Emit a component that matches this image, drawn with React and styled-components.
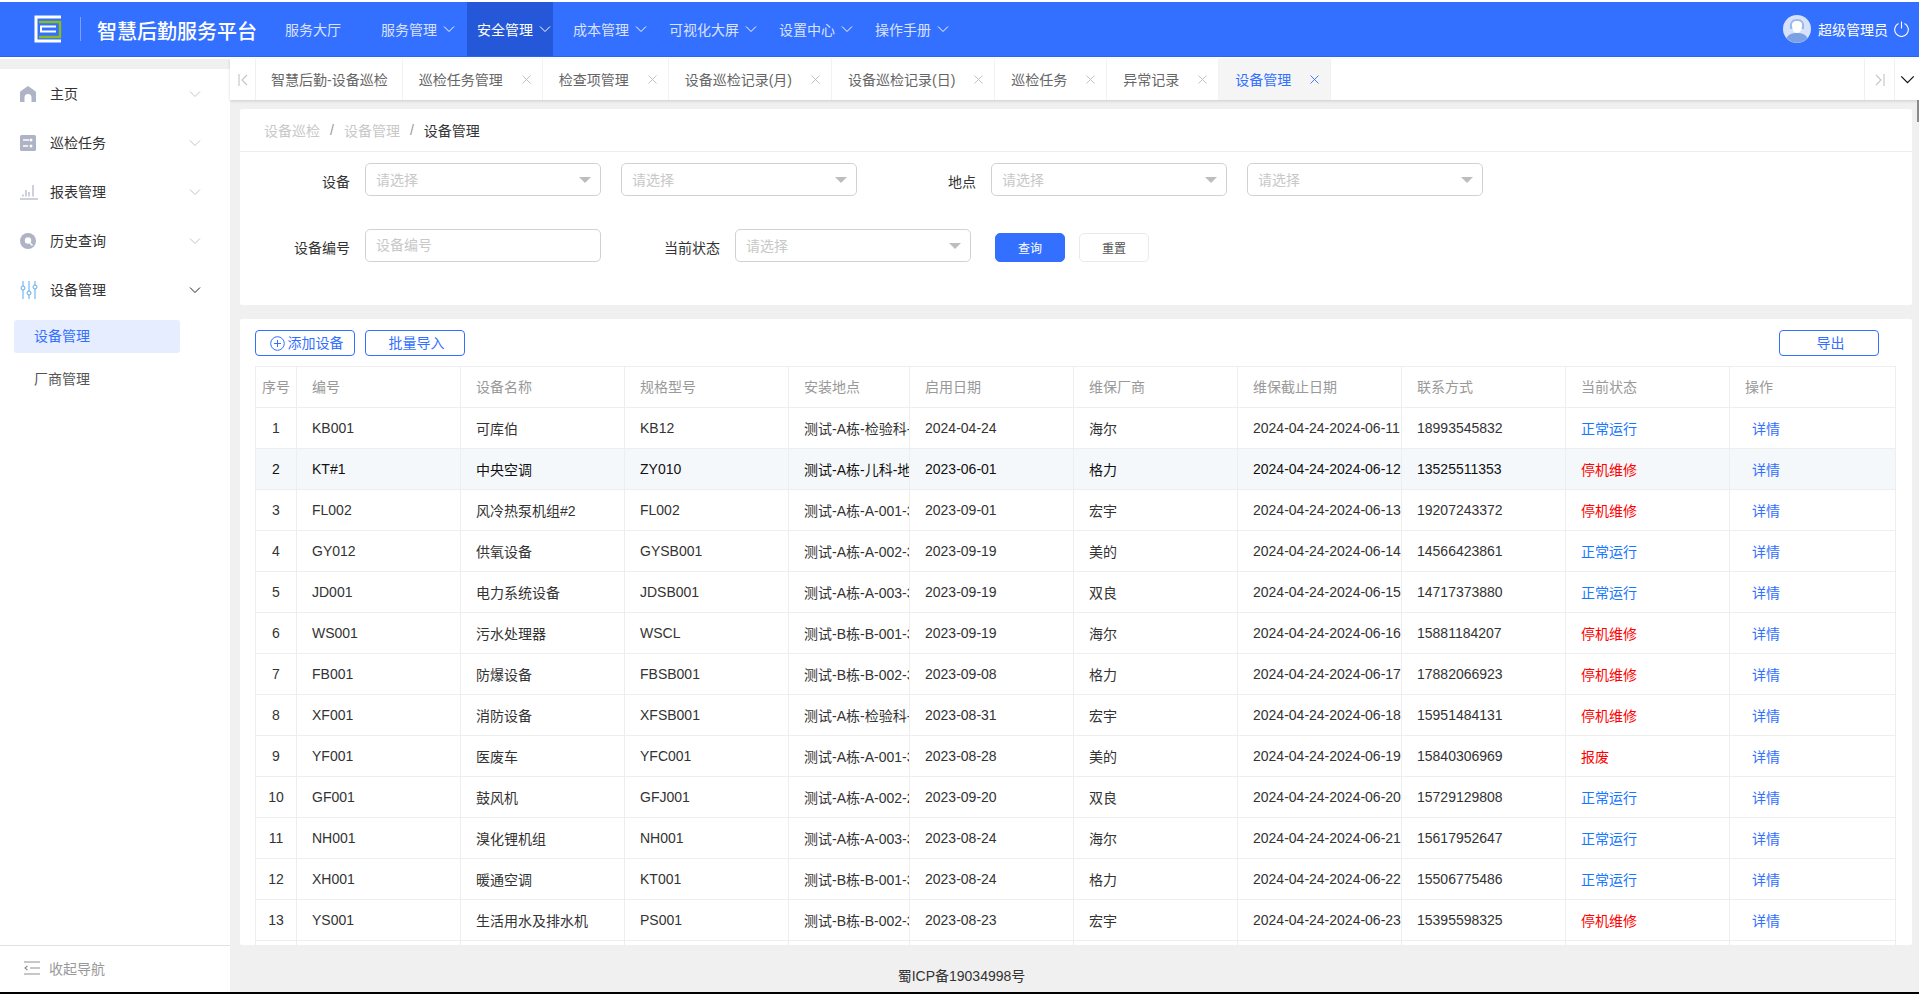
import styled, { createGlobalStyle } from 'styled-components';

const GlobalStyle = createGlobalStyle`
    html, body, #root {
        margin: 0;
        padding: 0;
        height: 100%;
    }
    body {
        overflow: hidden;
        background: #fff;
        font-family: "Liberation Sans", "Noto Sans CJK SC", sans-serif;
        font-size: 14px;
        color: #333;
    }
    * {
        box-sizing: border-box;
    }
`;

const Page = styled.div`
    position: relative;
    height: 100vh;
    padding-top: 2px;
    border-bottom: 2px solid #000;
    display: flex;
    flex-direction: column;
    overflow: hidden;
`;

/* 顶部导航 */
const Header = styled.header`
    height: 55px;
    flex: none;
    display: flex;
    align-items: stretch;
    background-color: #3370ff;
    border-bottom: 1px solid #2a64f0;
    color: #fff;
`;

const Brand = styled.div`
    width: 275px;
    flex: none;
    display: flex;
    align-items: center;
    padding-left: 34px;
    svg {
        flex: none;
    }
`;

const BrandLine = styled.i`
    width: 1px;
    height: 24px;
    margin: 0 16px 0 18px;
    background: rgba(255, 255, 255, 0.35);
`;

const BrandTitle = styled.div`
    padding-top: 2px;
    font-size: 20px;
    font-weight: 500;
    white-space: nowrap;
`;

const Nav = styled.nav`
    flex: 1;
    display: flex;
    gap: 10px;
`;

const NavItem = styled.div`
    display: flex;
    align-items: center;
    gap: 6px;
    padding: 0 ${(p) => (p.$plain ? 20 : 2)}px 1px 10px;
    white-space: nowrap;
    color: ${(p) => (p.$active ? '#fff' : 'rgba(255, 255, 255, 0.82)')};
    background-color: ${(p) => (p.$active ? '#2558d8' : 'transparent')};
`;

const User = styled.div`
    display: flex;
    align-items: center;
    padding-right: 10px;
    white-space: nowrap;
    span {
        margin: 0 6px 0 7px;
    }
`;

/* 主体 */
const Body = styled.div`
    flex: 1;
    min-height: 0;
    margin-top: 2px;
    display: flex;
    background-color: #f0f0f0;
`;

const Sidebar = styled.aside`
    width: 230px;
    flex: none;
    margin-top: 10px;
    display: flex;
    flex-direction: column;
    background-color: #fff;
`;

const Menu = styled.div`
    flex: 1;
`;

const MenuItem = styled.div`
    height: 49px;
    padding: 0 29px 0 20px;
    display: flex;
    align-items: center;
    color: #333;
    > span {
        flex: 1;
        padding-bottom: 2px;
    }
`;

const MenuIcon = styled.div`
    width: 30px;
    display: flex;
    align-items: center;
`;

const SubItem = styled.div`
    width: 166px;
    height: 33px;
    margin: ${(p) => (p.$active ? 6 : 10)}px 0 0 14px;
    padding: 0 0 3px 20px;
    display: flex;
    align-items: center;
    border-radius: 3px;
    color: ${(p) => (p.$active ? '#3370ff' : '#555')};
    background-color: ${(p) => (p.$active ? '#e6edfe' : 'transparent')};
`;

const Collapse = styled.div`
    height: 47px;
    flex: none;
    padding: 0 0 2px 24px;
    display: flex;
    align-items: center;
    gap: 9px;
    color: #999;
    border-top: 1px solid #e2e2e2;
`;

const Main = styled.main`
    flex: 1;
    min-width: 0;
    display: flex;
    flex-direction: column;
`;

/* 页签 */
const TabBar = styled.div`
    height: 41px;
    flex: none;
    display: flex;
    background-color: #fff;
    box-shadow: 0 1px 3px rgba(0, 0, 0, 0.15);
    position: relative;
`;

const TabArrow = styled.div`
    width: ${(p) => p.$w}px;
    flex: none;
    display: flex;
    align-items: center;
    justify-content: center;
    border-${(p) => p.$side}: 1px solid #f0f0f0;
`;

const Tab = styled.div`
    flex: none;
    display: flex;
    align-items: center;
    gap: 19px;
    padding: 0 ${(p) => (p.$closable ? 11 : 14)}px 2px ${(p) => (p.$closable ? 16 : 15)}px;
    white-space: nowrap;
    color: ${(p) => (p.$active ? '#3370ff' : '#666')};
    background-color: ${(p) => (p.$active ? '#f5f5f5' : '#fff')};
    border-right: 1px solid #f2f2f2;
    svg {
        margin-top: 2px;
    }
`;

const TabFill = styled.div`
    flex: 1;
`;

const ScrollThumb = styled.div`
    position: absolute;
    right: 0;
    top: 100px;
    width: 2px;
    height: 22px;
    background-color: #8a8a8a;
`;

const Content = styled.div`
    flex: 1;
    min-height: 0;
    padding: 9px 7px 0 10px;
    display: flex;
    flex-direction: column;
    gap: 14px;
`;

const Card = styled.section`
    background-color: #fff;
    border-radius: 2px;
`;

const FilterCard = styled(Card)`
    height: 196px;
    flex: none;
`;

const Breadcrumb = styled.div`
    height: 43px;
    padding-left: 24px;
    display: flex;
    align-items: center;
    color: #c8c8c8;
    border-bottom: 1px solid #eee;
    i {
        font-style: normal;
        margin: 0 10px;
        color: #999;
    }
    b {
        font-weight: 400;
        color: #333;
    }
`;

const FormRow = styled.div`
    display: flex;
    height: 33px;
    margin-top: ${(p) => p.$top}px;
`;

const Label = styled.label`
    width: ${(p) => p.$w}px;
    flex: none;
    padding: 3px 15px 0 0;
    line-height: 33px;
    text-align: right;
    color: #333;
`;

const Field = styled.div`
    position: relative;
    width: 236px;
    flex: none;
    height: 33px;
    margin-left: ${(p) => p.$left || 0}px;
    padding: 0 0 2px 10px;
    display: flex;
    align-items: center;
    border: 1px solid #d2d2d2;
    border-radius: 5px;
    color: #c8c8c8;
    background-color: #fff;
    &::after {
        content: '';
        position: absolute;
        right: 9px;
        top: 13px;
        border-left: 6px solid transparent;
        border-right: 6px solid transparent;
        border-top: 6px solid #bdbdbd;
    }
`;

const TextInput = styled.input`
    width: 236px;
    height: 33px;
    flex: none;
    padding: 0 10px 2px;
    border: 1px solid #d2d2d2;
    border-radius: 5px;
    outline: none;
    font: inherit;
    &::placeholder {
        color: #c8c8c8;
    }
`;

const FormButton = styled.button`
    width: 70px;
    height: 29px;
    flex: none;
    align-self: flex-end;
    margin-left: ${(p) => p.$left}px;
    padding: 0;
    border: 1px solid ${(p) => (p.$primary ? '#3370ff' : '#eaeaea')};
    border-radius: 5px;
    font: inherit;
    font-size: 12px;
    color: ${(p) => (p.$primary ? '#fff' : '#555')};
    background-color: ${(p) => (p.$primary ? '#3370ff' : '#fff')};
`;

const ListCard = styled(Card)`
    flex: 1;
    min-height: 0;
    padding: 11px 16px 0 15px;
    overflow: hidden;
`;

const Toolbar = styled.div`
    height: 26px;
    margin-bottom: 10px;
    padding-right: 17px;
    display: flex;
    justify-content: space-between;
`;

const ToolGroup = styled.div`
    display: flex;
    gap: 10px;
`;

const OutlineButton = styled.button`
    width: 100px;
    height: 26px;
    padding: 0 0 3px 3px;
    display: flex;
    align-items: center;
    justify-content: center;
    gap: 3px;
    border: 1px solid #3370ff;
    border-radius: 4px;
    font: inherit;
    color: #3370ff;
    background-color: #fff;
    svg {
        margin-top: 3px;
    }
`;

const Table = styled.table`
    width: 100%;
    table-layout: fixed;
    border-collapse: collapse;
    th, td {
        height: 41px;
        padding: 0 0 1px 15px;
        border: 1px solid #eee;
        text-align: left;
        font-weight: 400;
        white-space: nowrap;
        overflow: hidden;
    }
    th {
        padding-bottom: 2px;
        color: #999;
    }
    th:first-child, td:first-child {
        padding-left: 0;
        text-align: center;
    }
`;

const Row = styled.tr`
    color: ${(p) => (p.$hover ? '#111' : '#333')};
    background-color: ${(p) => (p.$hover ? '#f5f8fb' : '#fff')};
`;

const Status = styled.span`
    color: ${(p) => (p.$state === '正常运行' ? '#1677ff' : '#f00')};
`;

const Detail = styled.a`
    margin-left: 7px;
    color: #3370ff;
`;

const Footer = styled.footer`
    height: 47px;
    flex: none;
    padding: 20px 226px 0 0;
    text-align: center;
    color: #333;
`;

/* 图标 */
const Chevron = ({ color = '#fff', size = 12 }) => (
    <svg width={size} height={size} viewBox="0 0 12 12" fill="none" stroke={color} strokeWidth="1">
        <path d="M1 3.5l5 5 5-5" />
    </svg>
);

const Close = ({ color = '#bbb' }) => (
    <svg width="9" height="9" viewBox="0 0 9 9" fill="none" stroke={color} strokeWidth="0.9">
        <path d="M0.5 0.5l8 8M8.5 0.5l-8 8" />
    </svg>
);

const Logo = () => (
    <svg width="28" height="28" viewBox="0 0 28 28" fill="none">
        <path d="M27 2H2v24h25" stroke="#fff" strokeWidth="3" />
        <path d="M5 7h21v15H5" stroke="#8dbb1c" strokeWidth="2.4" />
        <path d="M22 11.5H7v5h15" stroke="#fff" strokeWidth="2" />
    </svg>
);

const Avatar = () => (
    <svg width="28" height="28" viewBox="0 0 28 28">
        <circle cx="14" cy="14" r="14" fill="#d5e2fa" />
        <path d="M7 14c-1-7 2-10 7-10s8 3 7 10z" fill="#9db9ec" />
        <path d="M3.5 23c2-4 6-5 10.500-5s8.500 1 10.500 5a14 14 0 0 1-21 0z" fill="#7ba0e3" />
        <path d="M9 10c0-3 2-4 5-4s5 1 5 4c0 5-2 8-5 8s-5-3-5-8z" fill="#fff" />
    </svg>
);

const Power = () => (
    <svg width="15" height="16" viewBox="0 0 15 16" fill="none" stroke="#fff" strokeWidth="1.1">
        <path d="M4.500 2.600a6.800 6.800 0 1 0 6 0" />
        <path d="M7.500 0.500v7" />
    </svg>
);

const HomeIcon = () => (
    <svg width="16" height="16" viewBox="0 0 16 16" fill="#aeb3c5">
        <path d="M8 0l7 5c.7.500 1 1 1 2v8c0 .6-.4 1-1 1h-3.500v-4.500a3.500 3.500 0 0 0-7 0V16H1c-.6 0-1-.4-1-1V7c0-1 .3-1.500 1-2z" />
    </svg>
);

const TaskIcon = () => (
    <svg width="16" height="16" viewBox="0 0 16 16">
        <rect width="16" height="16" rx="1.500" fill="#aeb3c5" />
        <path d="M3 5h6M3 11h5" stroke="#fff" strokeWidth="1.500" />
        <circle cx="11" cy="5" r="1.500" fill="#fff" />
        <circle cx="11" cy="11" r="1.500" fill="#fff" />
    </svg>
);

const ReportIcon = () => (
    <svg width="18" height="16" viewBox="0 0 18 16" fill="none" stroke="#aeb3c5">
        <path d="M0 15h18" strokeWidth="1.200" />
        <path d="M3 12.500v-2M6 12.500V6M9 12.500V8M13 12.500V1" strokeWidth="1.200" />
    </svg>
);

const HistoryIcon = () => (
    <svg width="16" height="16" viewBox="0 0 16 16">
        <circle cx="8" cy="8" r="8" fill="#aeb3c5" />
        <circle cx="8" cy="7.500" r="3.200" fill="#fff" />
        <path d="M10 10l2.500 2.500" stroke="#fff" strokeWidth="1.500" />
    </svg>
);

const DeviceIcon = () => (
    <svg width="18" height="18" viewBox="0 0 18 18" fill="none" stroke="#5aa9f2">
        <path d="M3 0v5M3 9v9M9 0v10M9 14v4M15 0v4M15 8v10" />
        <circle cx="3" cy="7" r="2" />
        <circle cx="9" cy="12" r="2" />
        <circle cx="15" cy="6" r="2" />
    </svg>
);

const CollapseIcon = () => (
    <svg width="16" height="14" viewBox="0 0 16 14" fill="none" stroke="#8f8f8f" strokeWidth="1.200">
        <path d="M0 1h16M6 7h10M0 13h16" />
        <path d="M3.500 5L1 7l2.500 2" />
    </svg>
);

const EdgeArrow = ({ flip }) => (
    <svg width="10" height="12" viewBox="0 0 10 12" fill="none" stroke="#c4c4c4" strokeWidth="1.100" transform={flip ? 'scale(-1 1)' : undefined}>
        <path d="M1 0v12M9 1L4 6l5 5" />
    </svg>
);

const PlusCircle = () => (
    <svg width="15" height="15" viewBox="0 0 15 15" fill="none" stroke="#3370ff">
        <circle cx="7.500" cy="7.500" r="6.800" />
        <path d="M7.500 4v7M4 7.500h7" />
    </svg>
);

const navs = ['服务管理', '安全管理', '成本管理', '可视化大屏', '设置中心', '操作手册'];

const menus = [
    { name: '主页', icon: <HomeIcon /> },
    { name: '巡检任务', icon: <TaskIcon /> },
    { name: '报表管理', icon: <ReportIcon /> },
    { name: '历史查询', icon: <HistoryIcon /> },
];

const tabs = ['巡检任务管理', '检查项管理', '设备巡检记录(月)', '设备巡检记录(日)', '巡检任务', '异常记录'];

const columns = [
    { title: '序号', w: 41 },
    { title: '编号', w: 164 },
    { title: '设备名称', w: 164 },
    { title: '规格型号', w: 164 },
    { title: '安装地点', w: 121 },
    { title: '启用日期', w: 164 },
    { title: '维保厂商', w: 164 },
    { title: '维保截止日期', w: 164 },
    { title: '联系方式', w: 164 },
    { title: '当前状态', w: 164 },
    { title: '操作' },
];

const NORMAL = '正常运行';
const REPAIR = '停机维修';

const devices = [
    ['KB001', '可库伯', 'KB12', '测试-A栋-检验科-301', '2024-04-24', '海尔', '11', '18993545832', NORMAL],
    ['KT#1', '中央空调', 'ZY010', '测试-A栋-儿科-地下室', '2023-06-01', '格力', '12', '13525511353', REPAIR],
    ['FL002', '风冷热泵机组#2', 'FL002', '测试-A栋-A-001-301', '2023-09-01', '宏宇', '13', '19207243372', REPAIR],
    ['GY012', '供氧设备', 'GYSB001', '测试-A栋-A-002-301', '2023-09-19', '美的', '14', '14566423861', NORMAL],
    ['JD001', '电力系统设备', 'JDSB001', '测试-A栋-A-003-301', '2023-09-19', '双良', '15', '14717373880', NORMAL],
    ['WS001', '污水处理器', 'WSCL', '测试-B栋-B-001-301', '2023-09-19', '海尔', '16', '15881184207', REPAIR],
    ['FB001', '防爆设备', 'FBSB001', '测试-B栋-B-002-301', '2023-09-08', '格力', '17', '17882066923', REPAIR],
    ['XF001', '消防设备', 'XFSB001', '测试-A栋-检验科-301', '2023-08-31', '宏宇', '18', '15951484131', REPAIR],
    ['YF001', '医废车', 'YFC001', '测试-A栋-A-001-301', '2023-08-28', '美的', '19', '15840306969', '报废'],
    ['GF001', '鼓风机', 'GFJ001', '测试-A栋-A-002-201', '2023-09-20', '双良', '20', '15729129808', NORMAL],
    ['NH001', '溴化锂机组', 'NH001', '测试-A栋-A-003-301', '2023-08-24', '海尔', '21', '15617952647', NORMAL],
    ['XH001', '暖通空调', 'KT001', '测试-B栋-B-001-301', '2023-08-24', '格力', '22', '15506775486', NORMAL],
    ['YS001', '生活用水及排水机', 'PS001', '测试-B栋-B-002-301', '2023-08-23', '宏宇', '23', '15395598325', REPAIR],
];

const SelectBox = ({ left }) => <Field $left={left}>请选择</Field>;

const App = () => {
    return (
        <Page>
            <GlobalStyle />
            <Header>
                <Brand>
                    <Logo />
                    <BrandLine />
                    <BrandTitle>智慧后勤服务平台</BrandTitle>
                </Brand>
                <Nav>
                    <NavItem $plain>服务大厅</NavItem>
                    {navs.map((name) => (
                        <NavItem key={name} $active={name === '安全管理'}>
                            {name}
                            <Chevron />
                        </NavItem>
                    ))}
                </Nav>
                <User>
                    <Avatar />
                    <span>超级管理员</span>
                    <Power />
                </User>
            </Header>
            <Body>
                <Sidebar>
                    <Menu>
                        {menus.map((m) => (
                            <MenuItem key={m.name}>
                                <MenuIcon>{m.icon}</MenuIcon>
                                <span>{m.name}</span>
                                <Chevron color="#c4c4c4" />
                            </MenuItem>
                        ))}
                        <MenuItem>
                            <MenuIcon><DeviceIcon /></MenuIcon>
                            <span>设备管理</span>
                            <Chevron color="#222" />
                        </MenuItem>
                        <SubItem $active>设备管理</SubItem>
                        <SubItem>厂商管理</SubItem>
                    </Menu>
                    <Collapse>
                        <CollapseIcon />
                        收起导航
                    </Collapse>
                </Sidebar>
                <Main>
                    <TabBar>
                        <TabArrow $w={26} $side="right"><EdgeArrow /></TabArrow>
                        <Tab>智慧后勤-设备巡检</Tab>
                        {tabs.map((name) => (
                            <Tab key={name} $closable>
                                {name}
                                <Close />
                            </Tab>
                        ))}
                        <Tab $closable $active>
                            设备管理
                            <Close color="#3370ff" />
                        </Tab>
                        <TabFill />
                        <TabArrow $w={30} $side="left"><EdgeArrow flip /></TabArrow>
                        <TabArrow $w={25} $side="left"><Chevron color="#111" size={15} /></TabArrow>
                    </TabBar>
                    <Content>
                        <FilterCard>
                            <Breadcrumb>
                                设备巡检<i>/</i>设备管理<i>/</i><b>设备管理</b>
                            </Breadcrumb>
                            <FormRow $top={11}>
                                <Label $w={125}>设备</Label>
                                <SelectBox />
                                <SelectBox left={20} />
                                <Label $w={134}>地点</Label>
                                <SelectBox />
                                <SelectBox left={20} />
                            </FormRow>
                            <FormRow $top={33}>
                                <Label $w={125}>设备编号</Label>
                                <TextInput placeholder="设备编号" />
                                <Label $w={134}>当前状态</Label>
                                <SelectBox />
                                <FormButton $primary $left={24}>查询</FormButton>
                                <FormButton $left={14}>重置</FormButton>
                            </FormRow>
                        </FilterCard>
                        <ListCard>
                            <Toolbar>
                                <ToolGroup>
                                    <OutlineButton><PlusCircle />添加设备</OutlineButton>
                                    <OutlineButton>批量导入</OutlineButton>
                                </ToolGroup>
                                <OutlineButton>导出</OutlineButton>
                            </Toolbar>
                            <Table>
                                <colgroup>
                                    {columns.map((c) => <col key={c.title} width={c.w} />)}
                                </colgroup>
                                <thead>
                                    <tr>
                                        {columns.map((c) => <th key={c.title}>{c.title}</th>)}
                                    </tr>
                                </thead>
                                <tbody>
                                    {devices.map((d, i) => (
                                        <Row key={d[0]} $hover={i === 1}>
                                            <td>{i + 1}</td>
                                            <td>{d[0]}</td>
                                            <td>{d[1]}</td>
                                            <td>{d[2]}</td>
                                            <td>{d[3]}</td>
                                            <td>{d[4]}</td>
                                            <td>{d[5]}</td>
                                            <td>2024-04-24-2024-06-{d[6]}</td>
                                            <td>{d[7]}</td>
                                            <td><Status $state={d[8]}>{d[8]}</Status></td>
                                            <td><Detail>详情</Detail></td>
                                        </Row>
                                    ))}
                                    <Row>
                                        {columns.map((c) => <td key={c.title} />)}
                                    </Row>
                                </tbody>
                            </Table>
                        </ListCard>
                    </Content>
                    <Footer>蜀ICP备19034998号</Footer>
                </Main>
            </Body>
            <ScrollThumb />
        </Page>
    );
};

export default App;
